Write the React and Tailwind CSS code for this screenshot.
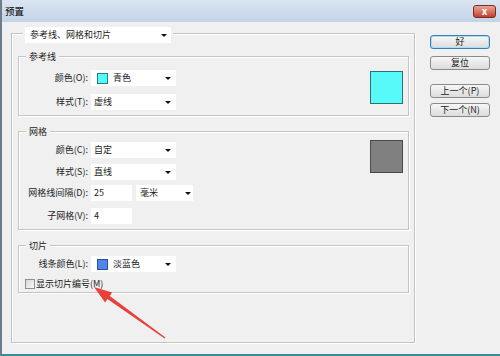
import React from 'react'

// Small black combo-box caret
function Caret({ className = '' }) {
  return (
    <span
      className={`ml-auto h-0 w-0 border-x-[3px] border-t-[3px] border-x-transparent border-t-[#111] ${className}`}
    />
  )
}

function Select({ className = '', swatch, children }) {
  return (
    <div className={`flex h-[16px] items-center bg-white ${className}`}>
      {swatch ? (
        <span className={`ml-[6px] mr-[5px] size-[11px] border ${swatch}`} />
      ) : (
        <span className="w-[3px]" />
      )}
      <span>{children}</span>
      <Caret className="mr-[5px]" />
    </div>
  )
}

function Input({ children }) {
  return <div className="flex h-[16px] w-[41px] items-center bg-white pl-[3px]">{children}</div>
}

function Group({ title, className = '', children }) {
  return (
    <div className={`border border-[#c4c4c4] shadow-[inset_1px_1px_0_#fff,1px_1px_0_#fff] ${className}`}>
      <div className="-mt-[7px] ml-[7px] w-fit bg-[#f0f0f0] px-[3px] leading-[13px]">{title}</div>
      {children}
    </div>
  )
}

function Row({ label, className = '', children }) {
  return (
    <div className={`flex items-center ${className}`}>
      <span className="w-[72px] pr-[3px] text-right">{label}</span>
      {children}
    </div>
  )
}

function Button({ primary, className = '', children }) {
  return (
    <div
      className={`flex h-[14px] w-[60px] items-center justify-center rounded-[3px] border bg-linear-to-b from-[#f7f7f7] to-[#dcdcdc] ${
        primary ? 'border-[#3c7fb1] shadow-[inset_0_0_0_1px_#a9dcf6]' : 'border-[#8a8a8a]'
      } ${className}`}
    >
      {children}
    </div>
  )
}

export default function App() {
  return (
    <div className="relative flex h-[356px] w-[500px] flex-col overflow-hidden border-b-2 border-l-2 border-b-[#3a8c98] border-l-[#6e7d89] bg-[#f0f0f0] font-['Noto_Sans_CJK_SC','Noto_Sans',sans-serif] text-[9px] text-[#1c1c1c]">
      <header className="flex h-[22px] shrink-0 items-center bg-linear-to-b from-[#dbe5f1] to-[#c3d4e8] pl-[3px] pr-[4px]">
        <span className="text-[9.5px] text-black">预置</span>
        <div className="ml-auto flex h-[13px] w-[23px] items-center justify-center rounded-[3px] border border-[#7d2b20] bg-linear-to-b from-[#e9a595] to-[#c23d29] text-[10px] font-bold leading-none text-white">
          x
        </div>
      </header>

      <div className="flex flex-1">
        <div className="ml-[9px] mt-[11px] h-[310px] w-[404px] border border-[#c4c4c4] shadow-[inset_1px_1px_0_#fff,1px_1px_0_#fff]">
          <div className="-mt-[7px] ml-[11px] w-fit bg-[#f0f0f0] px-[2px]">
            <div className="flex h-[16px] w-[146px] items-center bg-white pl-[5px]">
              <span>参考线、网格和切片</span>
              <Caret className="mr-[4px]" />
            </div>
          </div>

          <Group title="参考线" className="ml-[6px] mt-[13px] w-[391px]">
            <div className="flex items-start">
              <div className="mt-[7px] flex flex-col gap-[8px] pb-[5px]">
                <Row label="颜色(O):">
                  <Select className="w-[85px]" swatch="border-[#2a7c80] bg-[#55fbfb]">青色</Select>
                </Row>
                <Row label="样式(T):">
                  <Select className="w-[85px]">虚线</Select>
                </Row>
              </div>
              <div className="ml-auto mr-[5px] mt-[8px] size-[33px] border border-[#2f6f73] bg-[#58f9f9]" />
            </div>
          </Group>

          <Group title="网格" className="ml-[6px] mt-[15px] w-[391px]">
            <div className="flex items-start">
              <div className="flex flex-col pb-[5px]">
                <Row label="颜色(C):" className="mt-[4px]">
                  <Select className="w-[85px]">自定</Select>
                </Row>
                <Row label="样式(S):" className="mt-[6px]">
                  <Select className="w-[85px]">直线</Select>
                </Row>
                <Row label="网格线间隔(D):" className="mt-[5px]">
                  <Input>25</Input>
                  <div className="ml-[4px] flex h-[16px] w-[57px] items-center bg-white pl-[4px]">
                    <span>毫米</span>
                    <Caret className="mr-[2px]" />
                  </div>
                </Row>
                <Row label="子网格(V):" className="mt-[7px]">
                  <Input>4</Input>
                </Row>
              </div>
              <div className="ml-auto mr-[5px] mt-[2px] size-[33px] border border-[#4a4a4a] bg-[#808080]" />
            </div>
          </Group>

          <Group title="切片" className="ml-[6px] mt-[15px] w-[391px]">
            <Row label="线条颜色(L):" className="mt-[4px]">
              <Select className="h-[15px] w-[85px]" swatch="border-[#2b4f9c] bg-[#4f86e8]">淡蓝色</Select>
            </Row>
            <div className="mb-[2px] ml-[6px] mt-[5px] flex h-[13px] items-center">
              <span className="size-[10px] border border-[#8e8f8f] bg-linear-to-br from-[#d6d6d6] to-[#fafafa]" />
              <span className="ml-[1px]">显示切片编号(M)</span>
            </div>
          </Group>
        </div>

        <div className="ml-[15px] mt-[13px] flex flex-col">
          <Button primary>好</Button>
          <Button className="mt-[7px]">复位</Button>
          <Button className="mt-[14px]">上一个(P)</Button>
          <Button className="mt-[5px]">下一个(N)</Button>
        </div>
      </div>

      {/* red annotation arrow drawn over the dialog */}
      <svg className="pointer-events-none absolute left-0 top-0" width="500" height="356" viewBox="0 0 500 356">
        <polygon
          points="92,287 110.1,292.6 107.8,295.9 163.4,337.5 162.6,338.5 105.4,299.1 103.1,302.4"
          fill="#e8413b"
        />
      </svg>
    </div>
  )
}
